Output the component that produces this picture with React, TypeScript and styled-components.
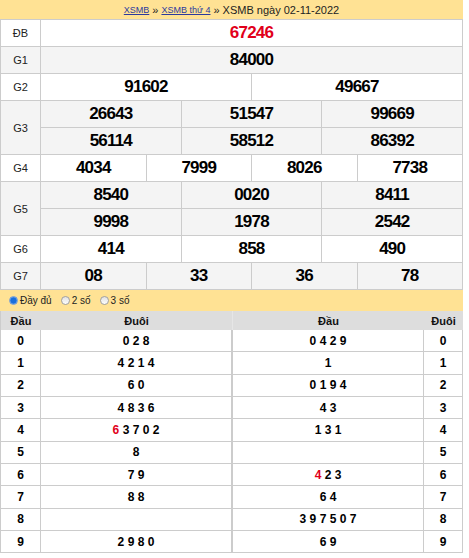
import React from "react";
import styled, { createGlobalStyle } from "styled-components";

const Global = createGlobalStyle`
  *, *::before, *::after { box-sizing: border-box; }
  html, body { margin: 0; padding: 0; background: #fff; }
  body { font-family: "Liberation Sans", Arial, sans-serif; color: #222; }
`;

const Page = styled.div`
  width: 463px;
`;

const TopBar = styled.div`
  height: 19px;
  background: #ffe294;
  display: flex;
  align-items: center;
  justify-content: center;
  gap: 3px;
  font-size: 11px;
  color: #222;
`;

const Crumb = styled.a`
  color: #2b3a9e;
  text-decoration: underline;
  font-size: 9px;
`;

const PrizeTable = styled.div`
  border-left: 1px solid #ccc;
  border-top: 1px solid #ccc;
`;

const PrizeRow = styled.div<{ $shaded: boolean }>`
  display: grid;
  grid-template-columns: 40px 1fr;
  background: ${(p) => (p.$shaded ? "#f4f4f4" : "#fff")};
`;

const Label = styled.div`
  border-right: 1px solid #ccc;
  border-bottom: 1px solid #ccc;
  display: flex;
  align-items: center;
  justify-content: center;
  font-size: 11px;
  color: #222;
`;

const Numbers = styled.div<{ $cols: number }>`
  display: grid;
  grid-template-columns: repeat(${(p) => p.$cols}, 1fr);
  grid-auto-rows: 27px;
`;

const Num = styled.div<{ $special?: boolean }>`
  border-right: 1px solid #ccc;
  border-bottom: 1px solid #ccc;
  display: flex;
  align-items: center;
  justify-content: center;
  font-weight: bold;
  font-size: 17px;
  letter-spacing: -0.8px;
  color: ${(p) => (p.$special ? "#e1001a" : "#000")};
`;

const ModeBar = styled.div`
  height: 21px;
  background: #ffe294;
  display: flex;
  align-items: center;
  padding-left: 9px;
  font-size: 10px;
  color: #222;
`;

const Mode = styled.label`
  display: flex;
  align-items: center;
  gap: 2px;
  margin-right: 9px;
`;

const Radio = styled.input`
  appearance: none;
  margin: 0;
  width: 9px;
  height: 9px;
  border-radius: 50%;
  border: 1px solid #a0a0a0;
  background: linear-gradient(#e2e2e2, #fdfdfd);
  &:checked {
    border-color: #6f9ad8;
    background: radial-gradient(circle, #1a6fdc 0 55%, #4d8fe6 65%, #cfe0f6 100%);
  }
`;

const Loto = styled.div`
  display: grid;
  grid-template-columns: 40px 191px 192px 39px;
  grid-template-rows: 19px;
  grid-auto-rows: 22.33px;
  border-left: 1px solid #ccc;
`;

const HeadCell = styled.div<{ $split?: boolean }>`
  background: #ddd;
  display: flex;
  align-items: center;
  justify-content: center;
  font-size: 11px;
  font-weight: bold;
  color: #111;
  border-left: ${(p) => (p.$split ? "1px solid #e6e6e6" : "none")};
`;

const Cell = styled.div<{ $split?: boolean }>`
  border-right: 1px solid #ccc;
  border-bottom: 1px solid #ccc;
  border-left: ${(p) => (p.$split ? "1px solid #ccc" : "none")};
  display: flex;
  align-items: center;
  justify-content: center;
  font-size: 12px;
  font-weight: bold;
  color: #000;
`;

const DigitText = styled.span`
  white-space: pre;
`;

const Red = styled.span`
  color: #e1001a;
`;

type Prize = { label: string; cols: number; nums: string[]; special?: boolean };

const prizes: Prize[] = [
  { label: "ĐB", cols: 1, nums: ["67246"], special: true },
  { label: "G1", cols: 1, nums: ["84000"] },
  { label: "G2", cols: 2, nums: ["91602", "49667"] },
  { label: "G3", cols: 3, nums: ["26643", "51547", "99669", "56114", "58512", "86392"] },
  { label: "G4", cols: 4, nums: ["4034", "7999", "8026", "7738"] },
  { label: "G5", cols: 3, nums: ["8540", "0020", "8411", "9998", "1978", "2542"] },
  { label: "G6", cols: 3, nums: ["414", "858", "490"] },
  { label: "G7", cols: 4, nums: ["08", "33", "36", "78"] },
];

type Digits = { d: string[]; red?: number };

const loto: { tail: Digits; head: Digits }[] = [
  { tail: { d: ["0", "2", "8"] }, head: { d: ["0", "4", "2", "9"] } },
  { tail: { d: ["4", "2", "1", "4"] }, head: { d: ["1"] } },
  { tail: { d: ["6", "0"] }, head: { d: ["0", "1", "9", "4"] } },
  { tail: { d: ["4", "8", "3", "6"] }, head: { d: ["4", "3"] } },
  { tail: { d: ["6", "3", "7", "0", "2"], red: 0 }, head: { d: ["1", "3", "1"] } },
  { tail: { d: ["8"] }, head: { d: [] } },
  { tail: { d: ["7", "9"] }, head: { d: ["4", "2", "3"], red: 0 } },
  { tail: { d: ["8", "8"] }, head: { d: ["6", "4"] } },
  { tail: { d: [] }, head: { d: ["3", "9", "7", "5", "0", "7"] } },
  { tail: { d: ["2", "9", "8", "0"] }, head: { d: ["6", "9"] } },
];

const DigitList = ({ v }: { v: Digits }) => (
  <DigitText>
    {v.d.map((x, i) => (
      <React.Fragment key={i}>
        {i > 0 ? " " : ""}
        {v.red === i ? <Red>{x}</Red> : x}
      </React.Fragment>
    ))}
  </DigitText>
);

export default function App() {
  return (
    <Page>
      <Global />
      <TopBar>
        <Crumb href="#">XSMB</Crumb>
        <span>»</span>
        <Crumb href="#">XSMB thứ 4</Crumb>
        <span>»</span>
        <span>XSMB ngày 02-11-2022</span>
      </TopBar>
      <PrizeTable>
        {prizes.map((p, i) => (
          <PrizeRow key={p.label} $shaded={i % 2 === 1}>
            <Label>{p.label}</Label>
            <Numbers $cols={p.cols}>
              {p.nums.map((n, j) => (
                <Num key={j} $special={p.special}>
                  {n}
                </Num>
              ))}
            </Numbers>
          </PrizeRow>
        ))}
      </PrizeTable>
      <ModeBar>
        <Mode>
          <Radio type="radio" name="mode" defaultChecked />
          Đầy đủ
        </Mode>
        <Mode>
          <Radio type="radio" name="mode" />2 số
        </Mode>
        <Mode>
          <Radio type="radio" name="mode" />3 số
        </Mode>
      </ModeBar>
      <Loto>
        <HeadCell>Đầu</HeadCell>
        <HeadCell>Đuôi</HeadCell>
        <HeadCell $split>Đầu</HeadCell>
        <HeadCell>Đuôi</HeadCell>
        {loto.map((r, i) => (
          <React.Fragment key={i}>
            <Cell>{i}</Cell>
            <Cell>
              <DigitList v={r.tail} />
            </Cell>
            <Cell $split>
              <DigitList v={r.head} />
            </Cell>
            <Cell>{i}</Cell>
          </React.Fragment>
        ))}
      </Loto>
    </Page>
  );
}
